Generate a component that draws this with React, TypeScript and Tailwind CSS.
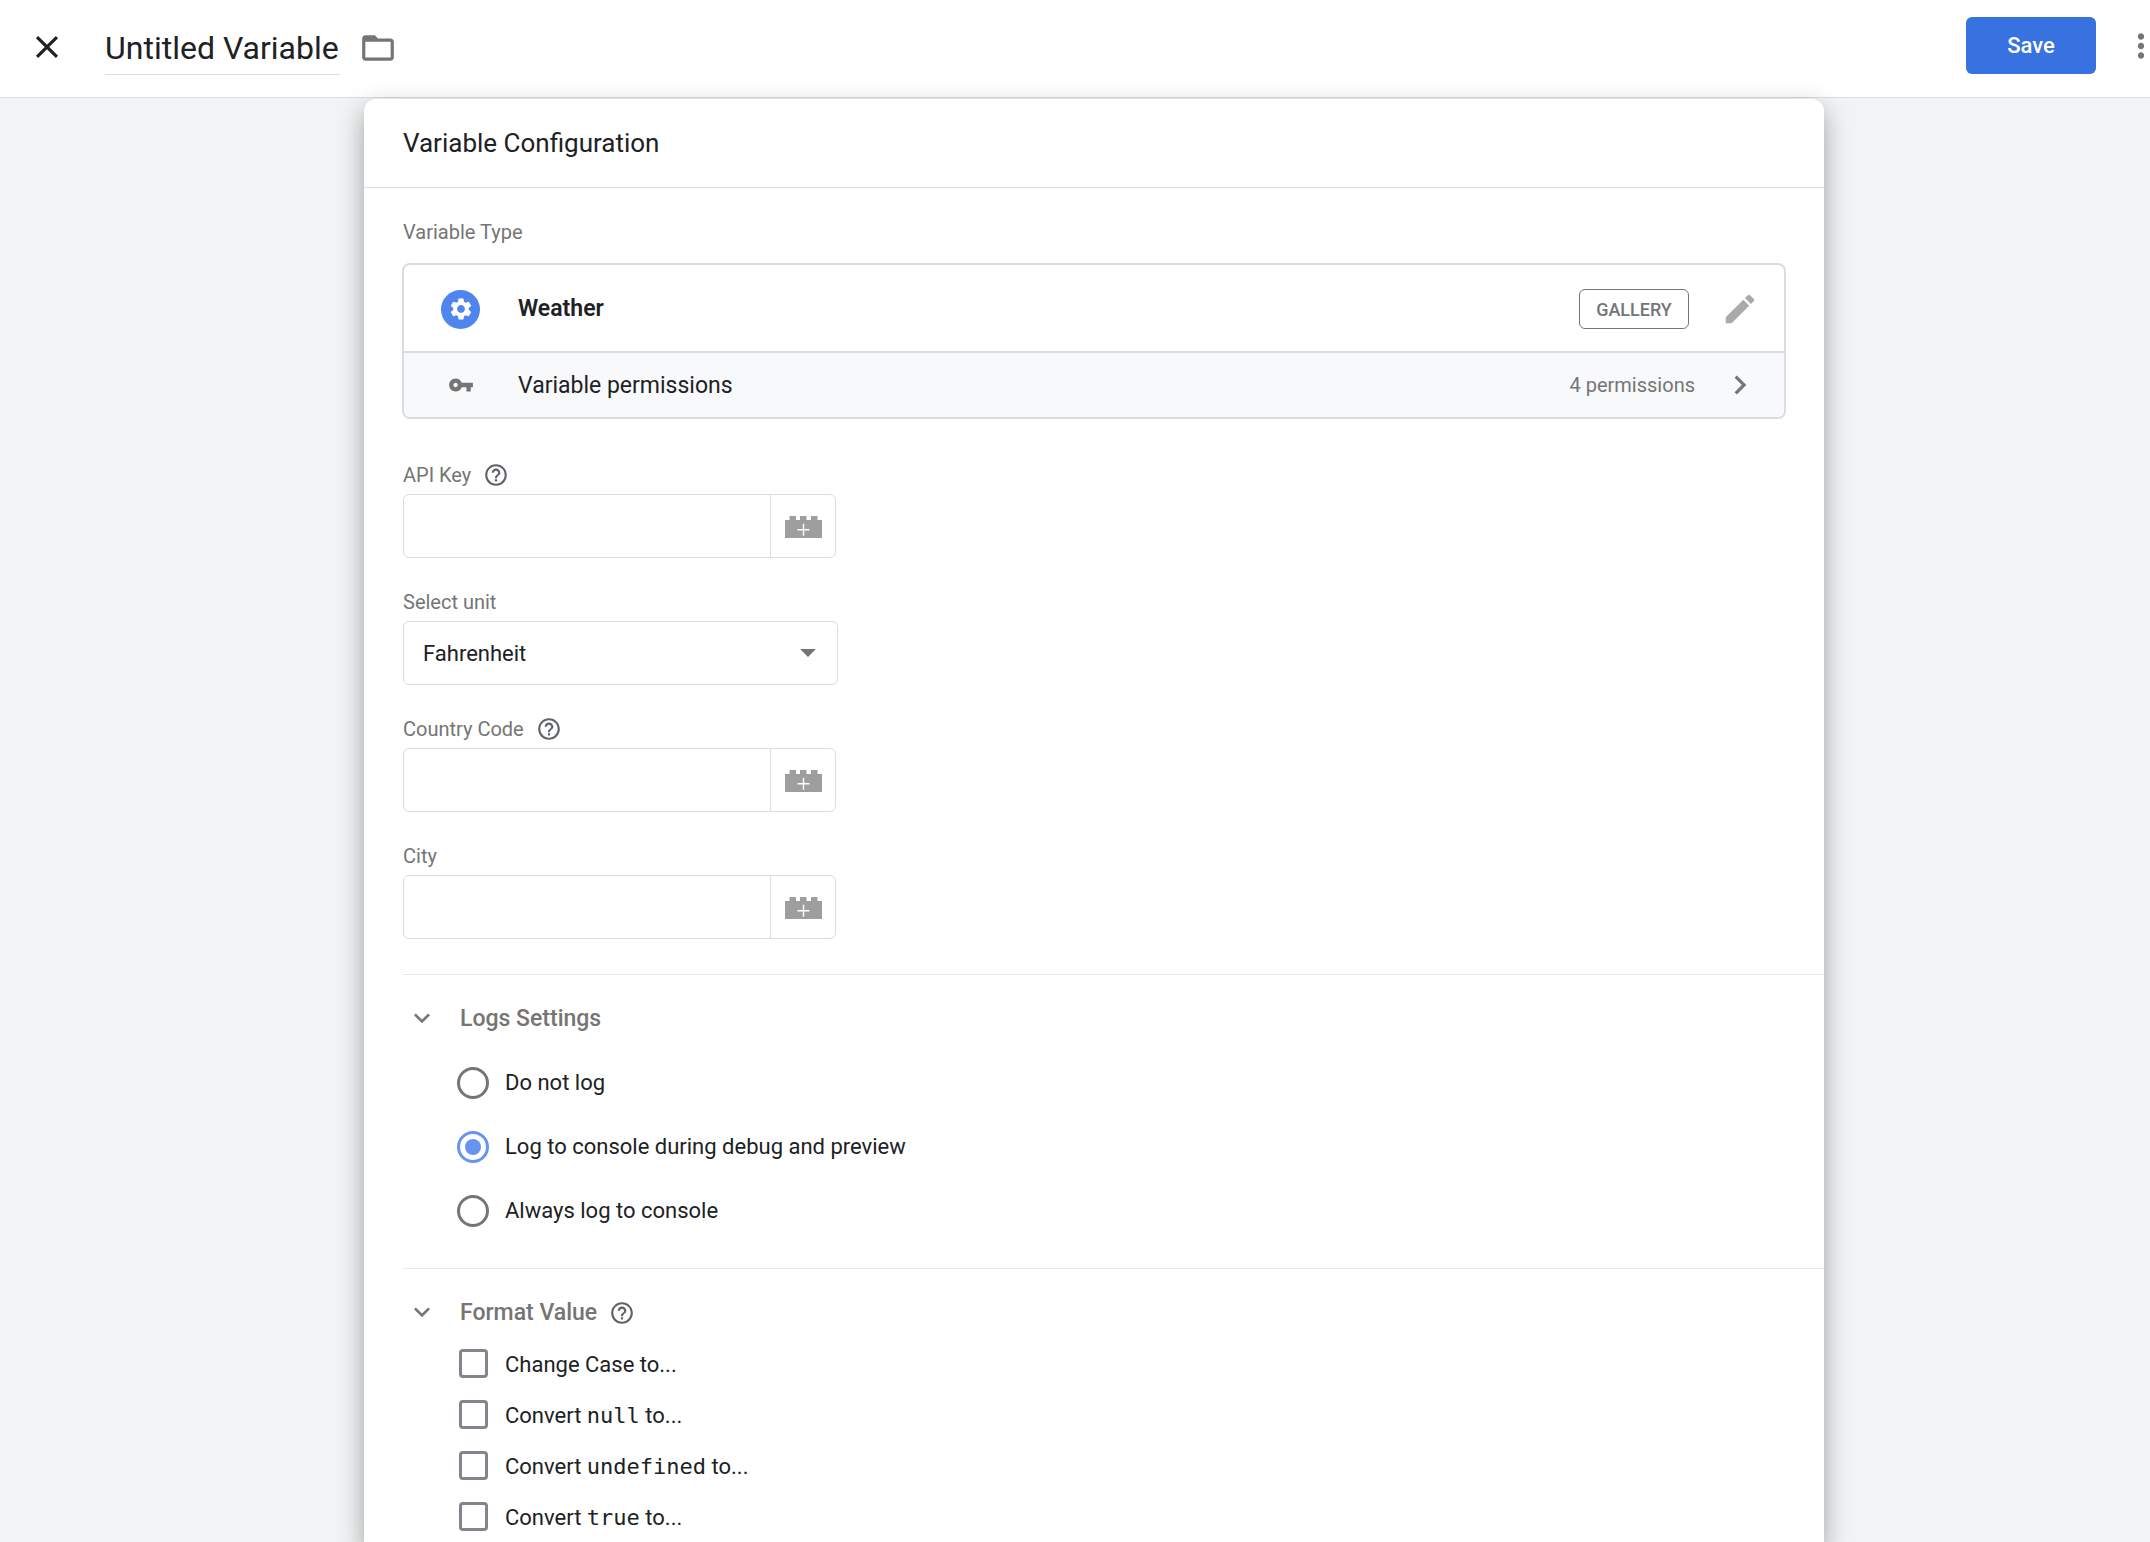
import { useState } from "react"
import type { ReactNode } from "react"
import {
  MdChevronRight,
  MdClose,
  MdEdit,
  MdExpandMore,
  MdFolderOpen,
  MdHelpOutline,
  MdMoreVert,
  MdSettings,
  MdVpnKey,
} from "react-icons/md"

function BrickIcon() {
  return (
    <svg width="37" height="22" viewBox="0 0 37 22" aria-hidden="true">
      <path
        fill="#9e9e9e"
        d="M0 4h4.5V0H11v4h4V0h6.5v4h4.5V0h6.5v4H37v18H0z"
      />
      <path stroke="#fff" strokeWidth="1.4" d="M12.5 13.8h12M18.5 7.8v12" />
    </svg>
  )
}

function HelpButton({ topic }: { topic: string }) {
  return (
    <button type="button" aria-label={`Help: ${topic}`} className="text-[#5f6368]">
      <MdHelpOutline size={26} />
    </button>
  )
}

type FieldProps = {
  id: string
  label: string
  help?: boolean
  children: ReactNode
}

function Field({ id, label, help, children }: FieldProps) {
  return (
    <div>
      <div className="mb-1.5 flex h-[26px] items-center gap-3">
        <label htmlFor={id} className="text-[20px] leading-6 text-[#757575]">
          {label}
        </label>
        {help && <HelpButton topic={label} />}
      </div>
      {children}
    </div>
  )
}

function VariableInput({ id }: { id: string }) {
  return (
    <div className="flex h-16 w-full max-w-[433px] overflow-hidden rounded-md border border-[#dadce0]">
      <input id={id} type="text" className="min-w-0 flex-1 px-5 text-[22px] outline-none" />
      <button
        type="button"
        aria-label="Insert variable"
        className="flex w-[65px] items-center justify-center border-l border-[#dadce0] pt-0.5"
      >
        <BrickIcon />
      </button>
    </div>
  )
}

type SectionProps = {
  title: string
  help?: boolean
  children: ReactNode
}

function Section({ title, help, children }: SectionProps) {
  return (
    <section className="ml-[39px] border-t border-[#e8e8e8] pt-7">
      <div className="flex h-8 items-center pl-[3px]">
        <button type="button" aria-label={`Collapse ${title}`} className="mr-[22px] pb-[3px] text-[#757575]">
          <MdExpandMore size={32} />
        </button>
        <h3 className="mr-3 text-[23px] leading-8 font-medium text-[#757575]">{title}</h3>
        {help && <HelpButton topic={title} />}
      </div>
      {children}
    </section>
  )
}

const LOG_OPTIONS = [
  { value: "never", label: "Do not log" },
  { value: "debug", label: "Log to console during debug and preview" },
  { value: "always", label: "Always log to console" },
]

const FORMAT_OPTIONS = [
  { id: "case", before: "Change Case to...", code: "", after: "" },
  { id: "null", before: "Convert ", code: "null", after: " to..." },
  { id: "undefined", before: "Convert ", code: "undefined", after: " to..." },
  { id: "true", before: "Convert ", code: "true", after: " to..." },
]

export default function App() {
  const [name, setName] = useState("Untitled Variable")
  const [logMode, setLogMode] = useState("debug")

  return (
    <div className="min-h-screen overflow-hidden bg-[#f1f3f4] font-[Roboto,sans-serif] text-[#202124]">
      {/* The sheet runs slightly past the right edge of the window */}
      <div className="-mr-[38px] flex min-h-screen flex-col">
        <header className="flex h-[98px] shrink-0 items-center border-b border-[#dadce0] bg-white pr-7 pb-1.5 pl-7">
          <button type="button" aria-label="Close" className="mt-0.5 mr-[39px]">
            <MdClose size={38} />
          </button>
          <input
            aria-label="Variable name"
            value={name}
            onChange={(e) => setName(e.target.value)}
            className="mt-1.5 mr-[19px] h-[52px] w-[235px] border-b border-[#dadce0] text-[32px] outline-none"
          />
          <button type="button" aria-label="Move to folder" className="mt-1 text-[#757575]">
            <MdFolderOpen size={38} />
          </button>
          <button
            type="button"
            className="mr-[26px] ml-auto h-[57px] w-[130px] rounded-md bg-[#3871e0] text-[22px] font-medium text-white"
          >
            Save
          </button>
          <button type="button" aria-label="More actions" className="text-[#757575]">
            <MdMoreVert size={38} />
          </button>
        </header>

        <main className="flex flex-1 pt-px">
          <div className="mx-auto w-full max-w-[1460px] rounded-t-xl bg-white shadow-[0_10px_26px_rgba(0,0,0,0.34)]">
            <div className="flex h-[89px] items-center border-b border-[#dadce0] px-[39px]">
              <h2 className="text-[26px] leading-8">Variable Configuration</h2>
            </div>

            <div className="px-[38px] pt-8 pb-[35px]">
              <h3 className="mb-[19px] pl-px text-[20px] leading-6 text-[#757575]">Variable Type</h3>

              {/* Selected type and its permissions */}
              <div className="overflow-hidden rounded-lg border-2 border-[#dadce0]">
                <div className="flex h-[86px] items-center pt-0.5 pr-[25px] pl-[37px]">
                  <span className="mr-[38px] flex size-[39px] items-center justify-center rounded-full bg-[#5084ee] text-white">
                    <MdSettings size={26} />
                  </span>
                  <span className="text-[23px] leading-8 font-semibold">Weather</span>
                  <span className="ml-auto flex h-10 w-[110px] items-center justify-center rounded-md border border-[#757575] text-[18px] font-medium text-[#757575]">
                    GALLERY
                  </span>
                  <button type="button" aria-label="Edit type" className="ml-8 text-[#aaaaaa]">
                    <MdEdit size={38} />
                  </button>
                </div>
                <button
                  type="button"
                  className="flex h-[66px] w-full items-center border-t-2 border-[#dadce0] bg-[#f8f9fb] pr-[25px] pl-[37px] text-left"
                >
                  <span className="mr-[38px] flex w-[39px] justify-center text-[#757575]">
                    <MdVpnKey size={26} />
                  </span>
                  <span className="pt-0.5 text-[23px] leading-8">Variable permissions</span>
                  <span className="ml-auto text-[20px] leading-6 text-[#757575]">4 permissions</span>
                  <MdChevronRight size={38} className="ml-[26px] text-[#757575]" />
                </button>
              </div>

              <div className="mt-[43px] flex flex-col gap-[31px] pl-px">
                <Field id="api-key" label="API Key" help>
                  <VariableInput id="api-key" />
                </Field>

                <Field id="unit" label="Select unit">
                  <div className="relative w-full max-w-[435px]">
                    <select
                      id="unit"
                      defaultValue="Fahrenheit"
                      className="h-16 w-full appearance-none rounded-md border border-[#dadce0] bg-white px-[19px] text-[22px] outline-none"
                    >
                      <option>Fahrenheit</option>
                      <option>Celsius</option>
                    </select>
                    <svg
                      className="pointer-events-none absolute top-7 right-[22px]"
                      width="16"
                      height="8"
                      viewBox="0 0 16 8"
                      aria-hidden="true"
                    >
                      <path fill="#757575" d="M0 0h16L8 8z" />
                    </svg>
                  </div>
                </Field>

                <Field id="country" label="Country Code" help>
                  <VariableInput id="country" />
                </Field>

                <Field id="city" label="City">
                  <VariableInput id="city" />
                </Field>
              </div>
            </div>

            <Section title="Logs Settings">
              <div className="mt-4 mb-[25px] pl-[54px]">
                {LOG_OPTIONS.map((option) => (
                  <label key={option.value} className="flex h-16 items-center gap-4 text-[22px] leading-8">
                    <input
                      type="radio"
                      name="logs"
                      value={option.value}
                      checked={logMode === option.value}
                      onChange={() => setLogMode(option.value)}
                      className="grid size-8 appearance-none place-items-center rounded-full border-3 border-[#757575] before:hidden before:size-4 before:rounded-full before:bg-[#6694f0] checked:border-[#6694f0] checked:before:block"
                    />
                    {option.label}
                  </label>
                ))}
              </div>
            </Section>

            <Section title="Format Value" help>
              <div className="mt-2.5 pl-14">
                {FORMAT_OPTIONS.map((option) => (
                  <label key={option.id} className="flex h-[51px] items-center gap-[17px] text-[22px] leading-8">
                    <input
                      type="checkbox"
                      className="mb-[3px] size-[29px] appearance-none rounded-sm border-3 border-[#80868b] checked:bg-[#6694f0]"
                    />
                    <span>
                      {option.before}
                      {option.code && (
                        <code className="font-['DejaVu_Sans_Mono',monospace]">{option.code}</code>
                      )}
                      {option.after}
                    </span>
                  </label>
                ))}
              </div>
            </Section>
          </div>
        </main>
      </div>
    </div>
  )
}
